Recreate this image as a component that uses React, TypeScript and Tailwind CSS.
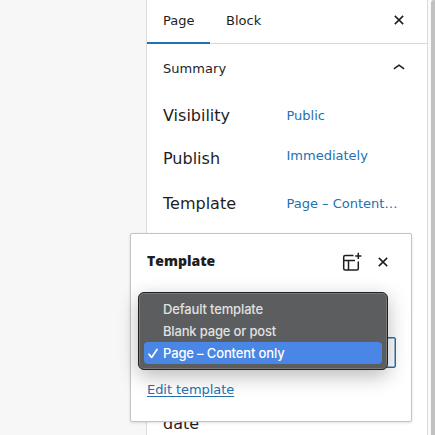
import React from 'react';

function CloseIcon() {
  return (
    <svg width="10" height="10" viewBox="0 0 10 10" fill="none" stroke="#1e1e1e" strokeWidth="1.5" className="block">
      <path d="M0.8 0.9 9.2 9.1M9.2 0.9 0.8 9.1" />
    </svg>
  );
}

function ChevronUp() {
  return (
    <svg width="12" height="6" viewBox="0 0 12 6" fill="none" stroke="#1e1e1e" strokeWidth="1.6" className="block">
      <path d="M0.9 4.8 6 1.2 11.1 4.8" />
    </svg>
  );
}

function AddTemplateIcon() {
  return (
    <svg width="20" height="20" viewBox="0 0 20 20" fill="none" stroke="#1e1e1e" strokeWidth="1.5" className="block">
      <path d="M11.5 3.6H3.2Q1.7 3.6 1.7 5.1V16.5Q1.7 18 3.2 18H14.8Q16.3 18 16.3 16.5V9.5M1.7 8.6H13M6.5 8.6V18M16.3 0.8V7M13.2 3.9H19.4" />
    </svg>
  );
}

const rows = [
  { label: 'Visibility', value: 'Public', height: 'h-[43px]', shift: 'pt-0' },
  { label: 'Publish', value: 'Immediately', height: 'h-[43px]', shift: 'pb-[5px]' },
  { label: 'Template', value: 'Page – Content…', height: 'h-[47px]', shift: 'pt-0' },
];

function TemplateMenu() {
  return (
    <div className="absolute left-[7px] top-[58px] h-[78px] w-[250px] rounded-[6px] border border-[#202122] bg-[#5b5d5e] px-[5px] pt-[5px] font-['Inter',sans-serif] text-[13px] font-medium text-[#e1e1e1] shadow-[inset_0_0_0_1px_#77797a,0_6px_20px_rgba(0,0,0,0.28)]">
      <div className="flex h-[22px] items-center pl-[19px] pt-px tracking-[-0.15px]">Default template</div>
      <div className="flex h-[22px] items-center pl-[19px] pt-px tracking-[-0.17px]">Blank page or post</div>
      <div className="flex h-[22px] items-center rounded-[4px] bg-[#4a86e5] pl-[4px] text-white">
        <svg width="10" height="11" viewBox="0 0 10 11" fill="none" stroke="#fff" strokeWidth="1.7" strokeLinecap="round" strokeLinejoin="round" className="mr-[5px] block shrink-0">
          <path d="M1 6.2 3.6 9.4 9 1.4" />
        </svg>
        <span className="whitespace-nowrap pt-px tracking-[-0.14px]">Page – Content only</span>
      </div>
    </div>
  );
}

function TemplatePopover() {
  return (
    <div className="absolute left-[130px] top-[233px] h-[189px] w-[282px] rounded-[2px] border border-[#c3c4c4] bg-white px-4 shadow-[0_1px_3px_rgba(0,0,0,0.12)]">
      <div className="flex h-[56px] items-center">
        <h2 className="flex-1 pb-[3px] font-['Open_Sans',sans-serif] text-[14px] font-extrabold">Template</h2>
        <button className="mr-[16px]"><AddTemplateIcon /></button>
        <button className="mr-[7px]"><CloseIcon /></button>
      </div>
      <div className="mt-[47px] h-[31px] w-[249px] rounded-[2px] border border-[#2271b1] shadow-[inset_0_0_0_0.5px_#2271b1]" />
      <a className="mt-[13px] block text-[13px] leading-[18px] tracking-[-0.06px] text-[#2271b1] underline underline-offset-2">Edit template</a>
      <TemplateMenu />
    </div>
  );
}

export default function App() {
  return (
    <div className="relative flex h-[435px] w-[435px] overflow-hidden bg-[#f7f7f7] font-['DejaVu_Sans',Verdana,sans-serif] text-[#1e1e1e]">
      <div className="w-[146px] shrink-0" />
      <main className="w-[282px] shrink-0 border-x border-[#dcdcdc] bg-white">
        <header className="flex h-[44px] items-stretch border-b border-[#d7d8d8] text-[13px]">
          <div className="-mb-px flex w-[63px] items-center border-b-2 border-[#2271b1] pb-px pl-4 leading-none">Page</div>
          <div className="flex flex-1 items-center pb-[2px] pl-4">Block</div>
          <button className="mr-[23px] pb-[3px]"><CloseIcon /></button>
        </header>
        <div className="flex h-[50px] items-center pl-4 pr-[22px] text-[13px]">
          <span className="flex-1 pb-px tracking-[0.05px]">Summary</span>
          <span className="pb-1"><ChevronUp /></span>
        </div>
        {rows.map((row) => (
          <div key={row.label} className={`flex items-center pl-4 ${row.height}`}>
            <span className="w-[123.5px] text-base">{row.label}</span>
            <span className={`whitespace-nowrap text-[13px] text-[#2271b1] ${row.shift}`}>{row.value}</span>
          </div>
        ))}
        <div className="mt-[185px] pl-4 text-base">date</div>
      </main>
      <aside className="flex flex-1 justify-end bg-[#fafafa]">
        <div className="w-1 rounded-tl-[3px] bg-[#c1c1c1]" />
      </aside>
      <TemplatePopover />
    </div>
  );
}
